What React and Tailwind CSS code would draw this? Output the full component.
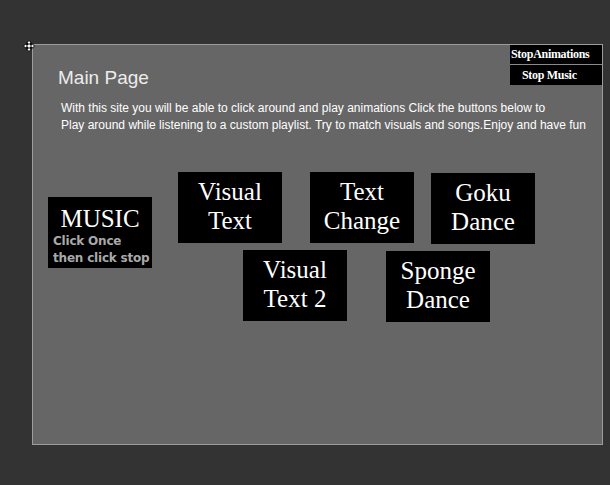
const serif = { fontFamily: '"Liberation Serif", "Times New Roman", serif' };

function MoveCursor() {
  return (
    <svg className="absolute left-[23px] top-[40px]" width="12" height="12" viewBox="0 0 12 12">
      <path
        d="M6 0.5 L8.5 3 L7 3 L7 5 L9 5 L9 3.5 L11.5 6 L9 8.5 L9 7 L7 7 L7 9 L8.5 9 L6 11.5 L3.5 9 L5 9 L5 7 L3 7 L3 8.5 L0.5 6 L3 3.5 L3 5 L5 5 L5 3 L3.5 3 Z"
        fill="#fff"
        stroke="#000"
        strokeWidth="1"
      />
    </svg>
  );
}

function AnimButton({ lines, className = '' }) {
  return (
    <div
      className={`flex h-[71px] w-[104px] flex-col bg-black pt-[5px] text-center text-[25px] leading-[29px] text-white ${className}`}
      style={serif}
    >
      {lines.map((line) => <span key={line}>{line}</span>)}
    </div>
  );
}

export default function App() {
  return (
    <div className="relative min-h-screen w-full bg-[#333333] pl-[32px] pt-[44px]">
      <MoveCursor />
      <div className="h-[401px] w-[571px] border border-[#9c9c9c] bg-[#666666]">
        <div className="flex items-start justify-between">
          <h1
            className="ml-[25px] mt-[22px] text-[19px] leading-[22px] text-[#ececec]"
            style={{ fontFamily: '"Liberation Sans", Arial, sans-serif' }}
          >
            Main Page
          </h1>
          <div className="w-[92px] bg-black text-[12px] font-bold leading-[19px] tracking-[-0.3px] text-white" style={serif}>
            <div className="h-[20px] border-b border-[#8a8a8a] pl-[1px]">StopAnimations</div>
            <div className="h-[20px] pl-[12px] pt-[1px]">Stop Music</div>
          </div>
        </div>

        <p
          className="ml-[28px] mt-[11px] text-[12px] leading-[17px] text-white"
          style={{ fontFamily: '"Liberation Sans", Arial, sans-serif' }}
        >
          With this site you will be able to click around and play animations Click the buttons below to
          <br />
          Play around while listening to a custom playlist. Try to match visuals and songs.Enjoy and have fun
        </p>

        <div className="ml-[15px] mt-[38px] flex items-start">
          <div className="mt-[25px] h-[71px] w-[104px] bg-black pt-[7px] text-white">
            <div className="text-center text-[25px] leading-[29px]" style={serif}>MUSIC</div>
            <div
              className="whitespace-nowrap pl-[5px] text-[12px] font-bold leading-[17px] tracking-[-0.2px] text-[#a9a9a9]"
              style={{ fontFamily: '"DejaVu Sans", Verdana, sans-serif' }}
            >
              <div>Click Once</div>
              <div>then click stop</div>
            </div>
          </div>

          <div className="ml-[26px] flex flex-col">
            <div className="flex items-start">
              <AnimButton lines={['Visual', 'Text']} />
              <AnimButton lines={['Text', 'Change']} className="ml-[28px]" />
              <AnimButton lines={['Goku', 'Dance']} className="ml-[17px] mt-[1px]" />
            </div>
            <div className="mt-[6px] flex items-start">
              <AnimButton lines={['Visual', 'Text 2']} className="ml-[65px]" />
              <AnimButton lines={['Sponge', 'Dance']} className="ml-[39px] mt-[1px]" />
            </div>
          </div>
        </div>
      </div>
    </div>
  );
}
